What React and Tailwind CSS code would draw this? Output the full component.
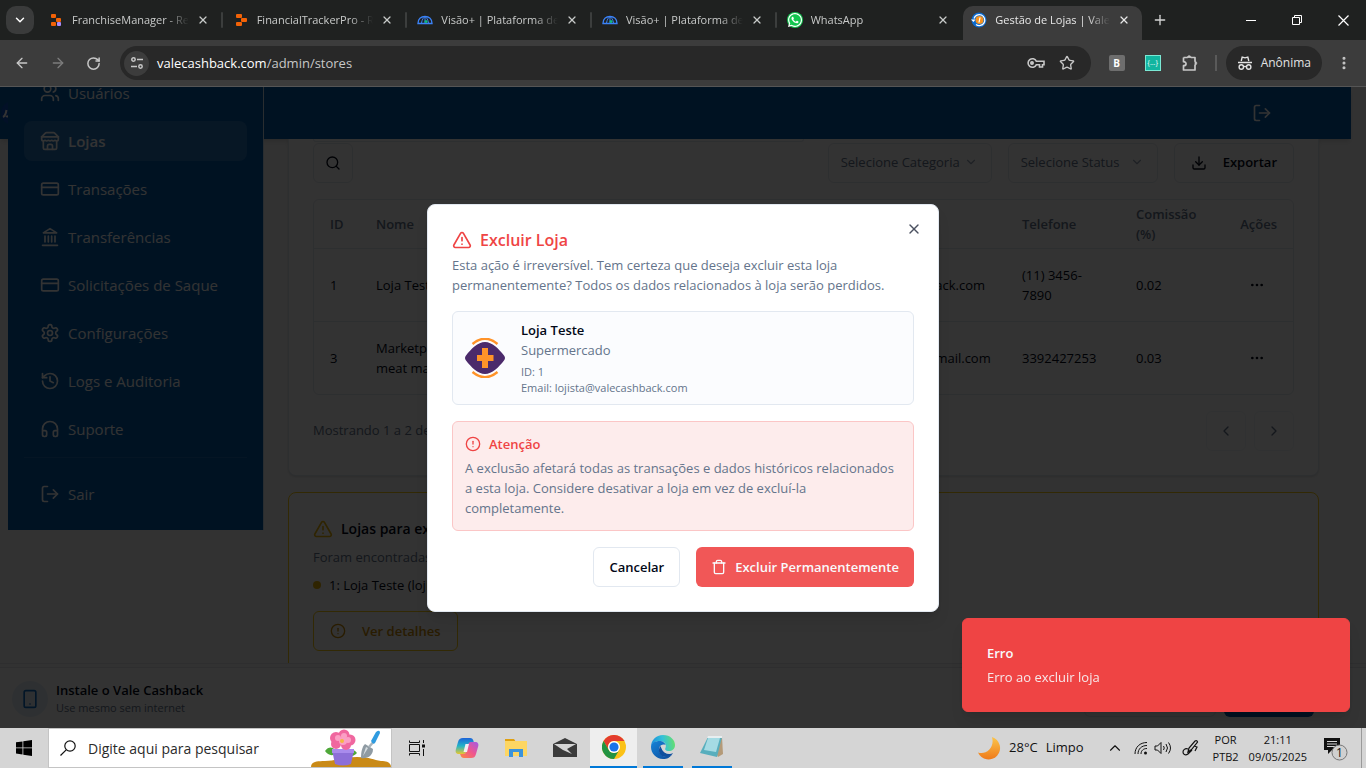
import React from 'react';
import {
  Users, CreditCard, History, Headphones, LogOut, Search, ChevronDown, ChevronLeft, ChevronRight, ChevronUp,
  Download, Ellipsis, TriangleAlert, CircleAlert, Trash, X, Smartphone, ArrowLeft, ArrowRight, RotateCw,
  Star, EllipsisVertical, Plus,
} from 'lucide-react';
import { FaWhatsapp } from 'react-icons/fa';

/* ---------- line icons ---------- */

const Line = ({ size = 20, children }) => (
  <svg width={size} height={size} viewBox="0 0 24 24" fill="none" stroke="currentColor" strokeWidth="2" strokeLinecap="round" strokeLinejoin="round" aria-hidden="true" className="shrink-0">
    {children}
  </svg>
);

const StoreIcon = () => (
  <Line>
    <path d="m2 7 4.41-4.41A2 2 0 0 1 7.83 2h8.34a2 2 0 0 1 1.42.59L22 7" />
    <path d="M4 12v8a2 2 0 0 0 2 2h12a2 2 0 0 0 2-2v-8" />
    <path d="M15 22v-4a2 2 0 0 0-2-2h-2a2 2 0 0 0-2 2v4" />
    <path d="M2 7h20" />
    <path d="M22 7v3a2 2 0 0 1-2 2a2.7 2.7 0 0 1-1.59-.63.7.7 0 0 0-.82 0A2.7 2.7 0 0 1 16 12a2.7 2.7 0 0 1-1.59-.63.7.7 0 0 0-.82 0A2.7 2.7 0 0 1 12 12a2.7 2.7 0 0 1-1.59-.63.7.7 0 0 0-.82 0A2.7 2.7 0 0 1 8 12a2.7 2.7 0 0 1-1.59-.63.7.7 0 0 0-.82 0A2.7 2.7 0 0 1 4 12a2 2 0 0 1-2-2V7" />
  </Line>
);

const BankIcon = () => (
  <Line>
    <path d="M3 22h18M6 18v-7M10 18v-7M14 18v-7M18 18v-7" />
    <path d="M12 2l8 5H4z" />
  </Line>
);

const GearIcon = () => (
  <Line>
    <path d="M12.22 2h-.44a2 2 0 0 0-2 2v.18a2 2 0 0 1-1 1.73l-.43.25a2 2 0 0 1-2 0l-.15-.08a2 2 0 0 0-2.73.73l-.22.38a2 2 0 0 0 .73 2.73l.15.1a2 2 0 0 1 1 1.72v.51a2 2 0 0 1-1 1.74l-.15.09a2 2 0 0 0-.73 2.73l.22.38a2 2 0 0 0 2.73.73l.15-.08a2 2 0 0 1 2 0l.43.25a2 2 0 0 1 1 1.73V20a2 2 0 0 0 2 2h.44a2 2 0 0 0 2-2v-.18a2 2 0 0 1 1-1.73l.43-.25a2 2 0 0 1 2 0l.15.08a2 2 0 0 0 2.73-.73l.22-.39a2 2 0 0 0-.73-2.73l-.15-.08a2 2 0 0 1-1-1.74v-.5a2 2 0 0 1 1-1.74l.15-.09a2 2 0 0 0 .73-2.73l-.22-.38a2 2 0 0 0-2.73-.73l-.15.08a2 2 0 0 1-2 0l-.43-.25a2 2 0 0 1-1-1.73V4a2 2 0 0 0-2-2z" />
    <circle cx="12" cy="12" r="3" />
  </Line>
);

/* ---------- browser ---------- */

const FranchiseFavicon = () => (
  <svg width="16" height="16" viewBox="0 0 16 16">
    <rect x="3" y="2" width="5" height="4" rx="1" fill="#f26207" />
    <rect x="8" y="6" width="5" height="4" rx="1" fill="#f26207" />
    <rect x="3" y="10" width="5" height="4" rx="1" fill="#f26207" />
    <rect x="9" y="10" width="4" height="4" rx="1" fill="#a78bfa" />
  </svg>
);

const TrackerFavicon = () => (
  <svg width="16" height="16" viewBox="0 0 16 16">
    <rect x="3" y="2" width="6" height="4" rx="1" fill="#f26207" />
    <rect x="8" y="6" width="6" height="4" rx="1" fill="#f26207" />
    <rect x="3" y="10" width="6" height="4" rx="1" fill="#f26207" />
  </svg>
);

const VisaoFavicon = () => (
  <svg width="16" height="16" viewBox="0 0 16 16" fill="none" stroke="#3b82f6" strokeWidth="1.4">
    <path d="M1 11.5C1 7 4 4.500 8 4.500S15 7 15 11.500z" />
    <path d="M4.500 11C5 7.500 6.500 5.500 8 4.500M11.500 11C11 7.500 9.500 5.500 8 4.500M8 5v6" strokeWidth="1" />
    <circle cx="9" cy="9.500" r="1.500" fill="#10b981" stroke="none" />
  </svg>
);

const WhatsFavicon = () => (
  <span className="flex size-4 items-center justify-center rounded-full bg-[#12c64f] text-white">
    <FaWhatsapp size={16} />
  </span>
);

const ValeFavicon = () => (
  <svg width="16" height="16" viewBox="0 0 16 16">
    <circle cx="8" cy="8" r="7.500" fill="#0b6bd0" />
    <path d="M3 6.500a5.500 5.500 0 1 1 2 6" fill="none" stroke="#fff" strokeWidth="1.300" />
    <path d="M0 7.500h4.500L2.500 10z" fill="#fff" />
    <circle cx="8.500" cy="8" r="4" fill="#f7931e" />
    <path d="M9 5.500l-1 5" stroke="#fff" strokeWidth="1.200" />
  </svg>
);

const tabs = [
  { title: 'FranchiseManager - Replit', icon: <FranchiseFavicon /> },
  { title: 'FinancialTrackerPro - Replit', icon: <TrackerFavicon /> },
  { title: 'Visão+ | Plataforma de saúde', icon: <VisaoFavicon /> },
  { title: 'Visão+ | Plataforma de saúde', icon: <VisaoFavicon /> },
  { title: 'WhatsApp', icon: <WhatsFavicon /> },
  { title: 'Gestão de Lojas | Vale Cashback', icon: <ValeFavicon />, active: true },
];

function Tab({ title, icon, active, divider }) {
  return (
    <div className="flex min-w-0 flex-1 items-center justify-between pr-0.5">
      <div className={'flex h-[34px] min-w-0 flex-1 items-center rounded-t-[10px] pb-1.5 pl-2 ' + (active ? 'mr-1 bg-[#3c3c3c] text-[#e8e8e8]' : 'text-[#c8cac9]')}>
        <span className="shrink-0">{icon}</span>
        <span className="ml-2 min-w-0 flex-1 overflow-hidden text-[11px] leading-4 whitespace-nowrap [mask-image:linear-gradient(to_right,black_80%,transparent)]">{title}</span>
        <button aria-label="Fechar guia" className="mr-2.5 ml-1.5 flex size-4 shrink-0 items-center justify-center">
          <X size={12} strokeWidth={2.500} />
        </button>
      </div>
      {divider && <span className="mb-1.5 h-4 w-0.5 shrink-0 rounded bg-[#3c3e3d]" />}
    </div>
  );
}

function TabBar() {
  return (
    <div className="flex h-10 items-end bg-[#1f2120]">
      <button aria-label="Pesquisar guias" className="mr-1.5 mb-1.5 ml-1.5 flex size-7 items-center justify-center rounded-[10px] bg-[#3a3b3b] text-white">
        <ChevronDown size={14} strokeWidth={2.500} />
      </button>
      <div className="flex max-w-[1108px] min-w-0 flex-1">
        {tabs.map((t, i) => <Tab key={i} {...t} divider={i < 4} />)}
      </div>
      <button aria-label="Nova guia" className="mb-3 ml-1 text-[#d5d5d5]"><Plus size={16} /></button>
      <div className="ml-auto flex h-10 text-white">
        <button aria-label="Minimizar" className="flex w-[46px] items-center justify-center">
          <svg width="10" height="10" stroke="currentColor"><path d="M0 5.500h10" /></svg>
        </button>
        <button aria-label="Restaurar" className="flex w-[46px] items-center justify-center">
          <svg width="10" height="10" fill="none" stroke="currentColor"><path d="M.5 2.500h7v7h-7zM2.500 2.500v-2h7v7h-2" /></svg>
        </button>
        <button aria-label="Fechar" className="flex w-[46px] items-center justify-center">
          <svg width="11" height="11" stroke="currentColor" strokeWidth="1.200"><path d="M.5.5l10 10M10.500.5l-10 10" /></svg>
        </button>
      </div>
    </div>
  );
}

function Toolbar() {
  return (
    <div className="flex h-[47px] items-center border-b border-[#555] bg-[#3c3c3c] text-[#c7c7c7]">
      <div className="flex w-[120px] items-center gap-5 pl-3.5">
        <button aria-label="Voltar"><ArrowLeft size={16} /></button>
        <button aria-label="Avançar" className="text-[#7c7c7c]"><ArrowRight size={16} /></button>
        <button aria-label="Recarregar"><RotateCw size={15} strokeWidth={2.400} /></button>
      </div>
      <div className="flex h-[34px] flex-1 items-center rounded-full bg-[#282828] pr-4 pl-1">
        <button aria-label="Informações do site" className="flex size-[25px] items-center justify-center rounded-full bg-[#3c3c3c]">
          <svg width="14" height="14" viewBox="0 0 14 14" fill="none" stroke="currentColor" strokeWidth="1.500">
            <circle cx="3.500" cy="3.500" r="1.700" /><path d="M7 3.500h6M1 10.500h6" /><circle cx="10.500" cy="10.500" r="1.700" />
          </svg>
        </button>
        <div className="ml-2 flex-1 text-[13px] leading-5 text-[#c7c7c7]">
          <span className="text-white">valecashback.com</span>/admin/stores
        </div>
        <button aria-label="Gerenciar senhas" className="mr-3.5">
          <svg width="18" height="12" viewBox="0 0 18 12" fill="none" stroke="currentColor" strokeWidth="1.600">
            <path d="M9.300 4.200H17v3.600h-1.500V10h-3V7.800H9.300A4.300 4.300 0 1 1 9.300 4.200z" /><circle cx="5" cy="6" r="1.200" fill="currentColor" />
          </svg>
        </button>
        <button aria-label="Adicionar aos favoritos"><Star size={16} /></button>
      </div>
      <div className="flex items-center pr-3.5 pl-[18px]">
        <span className="flex size-4 items-center justify-center rounded-[2px] bg-[#6e6e6e] text-[10px] font-bold text-white">B</span>
        <span className="ml-5 flex size-4 items-center justify-center border border-[#7be8d4] bg-[#12b5a0] text-[7px] text-white">{'{...}'}</span>
        <button aria-label="Extensões" className="ml-5">
          <svg width="18" height="18" viewBox="0 0 18 18" fill="none" stroke="currentColor" strokeWidth="1.700" strokeLinejoin="round">
            <path d="M2.500 3.500h4.300M9.700 3.500h4.300v4.300M14 10.700V16H2.500v-4.300c3.400 0 3.400-4 0-4V3.500" />
            <path d="M6.300 3.500c0-2.300 3.800-2.300 3.800 0zM14 7.300c2.300 0 2.300 3.800 0 3.800z" fill="currentColor" strokeWidth=".8" />
          </svg>
        </button>
        <span className="mr-[9px] ml-4 h-4 w-0.5 bg-[#5a5a5a]" />
        <div className="flex h-[34px] items-center gap-2 rounded-full bg-[#282828] px-[11px] text-[12px] text-[#e3e3e3]">
          <svg width="16" height="16" viewBox="0 0 16 16" fill="none" stroke="currentColor" strokeWidth="1.400">
            <path d="M4.200 6l1-4 2.800.8 2.800-.8 1 4M1 7.500h14" /><circle cx="4.300" cy="12" r="2.200" /><circle cx="11.700" cy="12" r="2.200" /><path d="M6.500 11.500h3" />
          </svg>
          Anônima
        </div>
        <button aria-label="Menu" className="ml-3.5"><EllipsisVertical size={16} strokeWidth={2.600} /></button>
      </div>
    </div>
  );
}

/* ---------- admin page ---------- */

const menu = [
  { label: 'Usuários', icon: <Users size={20} /> },
  { label: 'Lojas', icon: <StoreIcon />, active: true },
  { label: 'Transações', icon: <CreditCard size={20} /> },
  { label: 'Transferências', icon: <BankIcon /> },
  { label: 'Solicitações de Saque', icon: <CreditCard size={20} /> },
  { label: 'Configurações', icon: <GearIcon /> },
  { label: 'Logs e Auditoria', icon: <History size={20} /> },
  { label: 'Suporte', icon: <Headphones size={20} /> },
];

function Sidebar() {
  return (
    <aside className="col-start-2 row-span-2 row-start-1 flex h-[443px] flex-col justify-end overflow-hidden border-r border-white/80 bg-[#005bac] px-4 pb-4 text-[15px] leading-6 text-white">
      <nav className="flex flex-col gap-2">
        {menu.map((m) => (
          <a key={m.label} href="#" className={'flex h-10 shrink-0 items-center gap-2 rounded-lg px-4 ' + (m.active ? 'bg-white/15 font-semibold' : '')}>
            {m.icon}{m.label}
          </a>
        ))}
      </nav>
      <div className="mt-2 border-t border-white/10 pt-4">
        <a href="#" className="flex h-10 items-center gap-2 px-4"><LogOut size={20} />Sair</a>
      </div>
    </aside>
  );
}

const stores = [
  { id: '1', name: 'Loja Teste', cat: 'Mercado', mail: 'lojista@valecashback.com', phone: '(11) 3456-7890', fee: '0.02' },
  { id: '3', name: 'Marketplace meat market', cat: 'Mercado', mail: 'marketplace@hotmail.com', phone: '3392427253', fee: '0.03' },
];

const FilterSelect = ({ label, className }) => (
  <div className={'relative ' + className}>
    <select aria-label={label} defaultValue="" className="h-10 w-full appearance-none rounded-md border border-[#e2e8f0] bg-white pl-3 text-[13px] text-[#64748b]">
      <option value="">{label}</option>
    </select>
    <ChevronDown size={14} className="pointer-events-none absolute top-3 right-3.5 text-[#94a3b8]" />
  </div>
);

function StoresCard() {
  return (
    <section className="rounded-b-lg border-x border-b border-[#e2e8f0] bg-white px-6 pb-6 shadow-sm">
      <div className="mb-px h-[3px] w-1/2 rounded-b-md border-x border-b border-[#e2e8f0]" />
      <div className="flex gap-4">
        <button aria-label="Buscar" className="mr-auto flex size-10 items-center justify-center rounded-md border border-[#e2e8f0] text-[#020817]"><Search size={16} /></button>
        <FilterSelect label="Selecione Categoria" className="w-[164px]" />
        <FilterSelect label="Selecione Status" className="w-[150px]" />
        <button className="flex h-10 items-center gap-4 rounded-md border border-[#e2e8f0] px-4 text-[13px] font-semibold text-[#020817]"><Download size={16} />Exportar</button>
      </div>
      <div className="mt-4 overflow-hidden rounded-md border border-[#e2e8f0]">
        <table className="w-full table-fixed text-left text-[13px] leading-5 text-[#020817]">
          <colgroup>
            <col className="w-[46px]" /><col className="w-[124px]" /><col /><col className="w-[194px]" /><col className="w-[114px]" /><col className="w-[86px]" /><col className="w-[87px]" />
          </colgroup>
          <thead className="text-[#64748b]">
            <tr className="h-12">
              <th className="px-4 font-semibold">ID</th>
              <th className="px-4 font-semibold">Nome</th>
              <th className="px-4 font-semibold">Categoria</th>
              <th className="px-4 font-semibold">Email</th>
              <th className="px-4 font-semibold">Telefone</th>
              <th className="px-4 font-semibold">Comissão (%)</th>
              <th className="px-4 text-right font-semibold">Ações</th>
            </tr>
          </thead>
          <tbody>
            {stores.map((s) => (
              <tr key={s.id} className="h-[73px] border-t border-[#e2e8f0]">
                <td className="px-4">{s.id}</td>
                <td className="px-4">{s.name}</td>
                <td className="px-4">{s.cat}</td>
                <td className="px-4 whitespace-nowrap">{s.mail}</td>
                <td className="px-4">{s.phone}</td>
                <td className="px-4">{s.fee}</td>
                <td className="px-4">
                  <button aria-label="Ações da loja" className="ml-auto flex size-10 items-center justify-center"><Ellipsis size={16} /></button>
                </td>
              </tr>
            ))}
          </tbody>
        </table>
      </div>
      <div className="mt-4 flex items-center gap-2 text-[13px] text-[#64748b]">
        <span className="mr-auto">Mostrando 1 a 2 de 2 resultados</span>
        <button aria-label="Página anterior" className="flex size-10 items-center justify-center rounded-md border border-[#f1f5f9]"><ChevronLeft size={16} /></button>
        <button aria-label="Próxima página" className="flex size-10 items-center justify-center rounded-md border border-[#f1f5f9]"><ChevronRight size={16} /></button>
      </div>
    </section>
  );
}

function PendingCard() {
  return (
    <section className="mt-4 rounded-lg border border-[#facc15] bg-white px-6 pt-6 pb-6 text-[13px] leading-5">
      <h2 className="flex h-6 items-center gap-2 text-[14px] font-semibold text-[#020817]"><TriangleAlert size={20} className="text-[#eab308]" />Lojas para exclusão</h2>
      <p className="mt-1.5 text-[#64748b]">Foram encontradas lojas para excluir</p>
      <p className="mt-2 flex items-center gap-2 text-[#020817]"><span className="size-2 rounded-full bg-[#eab308]" />1: Loja Teste (lojista@valecashback.com)</p>
      <button className="mt-4 flex h-10 items-center gap-4 rounded-md border border-[#facc15] px-4 font-semibold text-[#ca8a04]"><CircleAlert size={16} />Ver detalhes</button>
    </section>
  );
}

function InstallBar() {
  return (
    <div className="absolute inset-x-0 bottom-0 border-t border-[#e5e7eb] bg-[#fafafa] pt-[3px]">
      <div className="flex h-[61px] items-center gap-2 border-t border-[#e5e7eb] bg-white px-3 pt-0.5">
        <span className="flex size-9 items-center justify-center rounded-full bg-[#e6f0fa] text-[#0a6cc2]"><Smartphone size={20} /></span>
        <div>
          <p className="text-[13px] leading-[18px] font-semibold text-[#020817]">Instale o Vale Cashback</p>
          <p className="text-[11px] leading-[18px] text-[#64748b]">Use mesmo sem internet</p>
        </div>
        <div className="mr-10 ml-auto flex gap-2">
          <button className="h-9 w-[132px] rounded-md border border-[#e2e8f0] text-[13px]">Agora não</button>
          <button className="h-9 w-[90px] rounded-md bg-[#005bac] text-[13px] text-white">Instalar</button>
        </div>
      </div>
    </div>
  );
}

const StoreLogo = () => (
  <svg width="40" height="40" viewBox="0 0 40 40" className="shrink-0" aria-hidden="true">
    <path d="M7.500 6Q20-4.500 32.500 6M7.500 34Q20 44.500 32.500 34" fill="none" stroke="#ff9329" strokeWidth="2.400" />
    <path d="M1 22.500Q-1 20 1 17.500C6 11 13 4 20 4s14 7 19 13.500q2 2.500 0 5C34 29 27 36 20 36S6 29 1 22.500z" fill="#4b2a6b" />
    <path d="M17 10h6v7h5.500v6H23v7h-6v-7h-5v-6h5z" fill="#ff9329" />
  </svg>
);

function DeleteDialog() {
  return (
    <div className="absolute inset-0 flex items-center justify-center bg-black/80">
      <div role="dialog" aria-modal="true" aria-labelledby="dlg-title" className="relative w-full max-w-lg rounded-lg border border-[#e2e8f0] bg-white p-6 text-[13px] leading-5 text-[#64748b] shadow-lg">
        <button aria-label="Fechar" className="absolute top-4 right-4 text-[#4b5160]"><X size={16} /></button>
        <h1 id="dlg-title" className="mb-1 flex h-[22px] items-center gap-2 text-[16px] font-semibold text-[#ef4444]"><TriangleAlert size={20} />Excluir Loja</h1>
        <p>Esta ação é irreversível. Tem certeza que deseja excluir esta loja permanentemente? Todos os dados relacionados à loja serão perdidos.</p>
        <div className="mt-4 flex h-[94px] items-center gap-4 rounded-md border border-[#e2e8f0] bg-[#fbfcfe] px-3">
          <StoreLogo />
          <div>
            <p className="font-semibold text-[#020817]">Loja Teste</p>
            <p>Supermercado</p>
            <p className="mt-1 text-[11px] leading-4">ID: 1<br />Email: lojista@valecashback.com</p>
          </div>
        </div>
        <div className="mt-4 rounded-md border border-[#fbc6c6] bg-[#fdecec] p-3">
          <p className="mb-1 flex items-center gap-2 font-semibold text-[#ef4444]"><CircleAlert size={16} />Atenção</p>
          <p>A exclusão afetará todas as transações e dados históricos relacionados a esta loja. Considere desativar a loja em vez de excluí-la completamente.</p>
        </div>
        <div className="mt-4 flex justify-end gap-4 font-semibold">
          <button className="h-10 rounded-md border border-[#e2e8f0] px-[15px] text-[#020817]">Cancelar</button>
          <button className="flex h-10 items-center gap-2 rounded-md bg-[#f15757] px-[15px] text-[#f8fafc]"><Trash size={16} />Excluir Permanentemente</button>
        </div>
      </div>
    </div>
  );
}

function AdminPage() {
  return (
    <div className="relative min-h-0 flex-1 overflow-hidden bg-[#fafafa]">
      <div className="grid grid-cols-[8px_256px_minmax(0,1fr)] grid-rows-[52px_auto] pr-[15px]">
        <header className="col-span-3 col-start-1 row-start-1 flex items-center justify-between bg-[#005bac] text-white shadow-md">
          <svg width="24" height="24" viewBox="0 0 24 24" aria-hidden="true">
            <circle cx="13" cy="12" r="12" fill="#0a4fc0" /><path d="M3 16c2-1 3-4 3.500-7M6 15q1 1 3 0" fill="none" stroke="#fff" strokeWidth="2" />
          </svg>
          <button aria-label="Sair" className="mr-[79px]"><LogOut size={20} /></button>
        </header>
        <Sidebar />
        <main className="col-start-3 row-start-2 pr-8 pl-6">
          <StoresCard />
          <PendingCard />
        </main>
      </div>
      <InstallBar />
      <DeleteDialog />
      <div role="alert" className="absolute right-4 bottom-4 w-[388px] rounded-md border border-[#ef4444] bg-[#ef4444] p-6 text-[13px] leading-5 text-[#f8fafc] shadow-lg">
        <p className="font-semibold">Erro</p>
        <p className="mt-1 opacity-90">Erro ao excluir loja</p>
      </div>
    </div>
  );
}

/* ---------- taskbar ---------- */

const Garden = () => (
  <svg width="80" height="38" viewBox="0 0 80 38" className="shrink-0" aria-hidden="true">
    <path d="M0 38c0-5 5-6 14-6 10 0 16-4 32-4 14 0 16 3 24 4 8 0 10 3 10 6z" fill="#c98a17" />
    <path d="M14 22c4-6 10-4 12 2-5 4-9 2-12-2zM46 24c-5-6-11-3-12 1 4 4 8 3 12-1z" fill="#4fa83a" />
    <path d="M21 21h22l-3 14q-8 3-16 0z" fill="#8d6fd8" /><path d="M21 20h22v4H21z" fill="#a98bec" />
    <g fill="#f0679f"><circle cx="25" cy="9" r="6" /><circle cx="33" cy="6" r="5.500" /><circle cx="39" cy="11" r="5.500" /><circle cx="35" cy="16" r="5" /><circle cx="25" cy="15" r="5" /></g>
    <g fill="#fb9fc4"><circle cx="27" cy="9" r="3" /><circle cx="33" cy="7" r="3" /><circle cx="37" cy="11" r="3" /><circle cx="32" cy="12" r="4" /></g>
    <circle cx="31" cy="12" r="2" fill="#f5b83d" />
    <path d="M54 15l8 5c0 7-6 10-12 9 0-6 1-11 4-14z" fill="#8f9ba3" /><path d="M55 18l2 1-5 8z" fill="#d6dde1" /><path d="M58 18l6-7" stroke="#a9b4bb" strokeWidth="2.500" />
    <path d="M60 12l5-9q4-3 4 1l-5 10q-2 2-4-2z" fill="#2f9be0" />
  </svg>
);

const TaskView = () => (
  <svg width="18" height="16" viewBox="0 0 18 16" fill="none" stroke="#111" aria-hidden="true">
    <path d="M1.500.5v2h10v-2M1.500 15.500v-2h10v2M1.500 4.500h10v7h-10zM15.500 0v3M15.500 9v7" /><rect x="14" y="4.500" width="3" height="3" fill="#111" stroke="none" />
  </svg>
);

const Copilot = () => (
  <svg width="24" height="24" viewBox="0 0 24 24" aria-hidden="true">
    <defs>
      <linearGradient id="cpa" x1="0" y1="0" x2="0" y2="1"><stop offset="0" stopColor="#1d63d8" /><stop offset=".5" stopColor="#22b4c8" /><stop offset="1" stopColor="#e9c72e" /></linearGradient>
      <linearGradient id="cpb" x1="1" y1="0" x2="0" y2="1"><stop offset="0" stopColor="#a25ae6" /><stop offset=".5" stopColor="#f0568d" /><stop offset="1" stopColor="#fb8b3c" /></linearGradient>
    </defs>
    <path d="M8 2h7c2 0 3 1 3.500 3l.5 2h-3c-2 0-3 1-3.500 3l-1.500 6c-.5 1.500-1 2-3 2H4c-3 0-4-2-3-5l2-7c1-3 2-4 5-4z" fill="url(#cpa)" />
    <path d="M16 22H9c-2 0-3-1-3.500-3L5 18h3c2 0 3-1 3.500-3L13 9c.5-1.500 1-3 3-3h4c3 0 4 2 3 5l-2 7c-1 3-2 4-5 4z" fill="url(#cpb)" />
    <path d="M10.500 8h3.500l-2 8H8.500z" fill="#f2eef2" />
  </svg>
);

const Explorer = () => (
  <svg width="22" height="20" viewBox="0 0 22 20" aria-hidden="true">
    <path d="M0 1h9l2 3H0z" fill="#e0a010" /><path d="M0 3h22v15H0z" fill="#fdd663" />
    <path d="M4 11h14v8h-4v-5H8v5H4z" fill="#3b93dc" />
  </svg>
);

const Mail = () => (
  <svg width="24" height="20" viewBox="0 0 24 20" aria-hidden="true">
    <path d="M0 6l12-6 12 6v13H0z" fill="#3b3b3b" /><path d="M1 6h22l-9 5 5 5-9-4z" fill="#d5d5d5" />
  </svg>
);

const Chrome = () => (
  <svg width="24" height="24" viewBox="0 0 24 24" aria-hidden="true">
    <circle cx="12" cy="12" r="12" fill="#fbc116" />
    <path d="M1.600 6A12 12 0 0 1 22.400 6H12a6 6 0 0 0-5.200 9z" fill="#e33b2e" />
    <path d="M1.600 6a12 12 0 0 0 10.400 18l5.200-9A6 6 0 0 1 6.800 15z" fill="#229342" />
    <circle cx="12" cy="12" r="6" fill="#fff" /><circle cx="12" cy="12" r="4.600" fill="#1a73e8" />
  </svg>
);

const Edge = () => (
  <svg width="24" height="24" viewBox="0 0 24 24" aria-hidden="true">
    <defs>
      <linearGradient id="ega" x1="0" y1=".4" x2="1" y2=".3"><stop offset="0" stopColor="#1b8fdc" /><stop offset=".5" stopColor="#35c1d8" /><stop offset="1" stopColor="#66e06a" /></linearGradient>
      <linearGradient id="egb" x1="0" y1="0" x2="1" y2="1"><stop offset="0" stopColor="#1784d8" /><stop offset="1" stopColor="#0c4a9a" /></linearGradient>
    </defs>
    <path d="M0 12C0 5 5 0 12 0c7.500 0 12 5 12 10 0 4-3 6-6 6-3.500 0-4.500-1.500-3.500-3C16 9 13 6 9 6 4 6 0 9 0 12z" fill="url(#ega)" />
    <path d="M0 12c0-4 4-6 9-6 2 0 5 1.500 5.500 4C10 8 6 13 9 18c2 4 7 5 12 1.500C18 24 14 24 12 24 5 24 0 18 0 12z" fill="url(#egb)" />
    <path d="M9.500 11c-4 5 0 12 7 11 3-.5 5-3 5.500-4-4 2-10 1-12.500-7z" fill="#0f4f9e" />
    <path d="M11 13c.5 4 4 6 8 5.500l2.500-.8c-2 .7-6 .2-7.500-3z" fill="#d5d5d5" />
  </svg>
);

const Notepad = () => (
  <svg width="24" height="22" viewBox="0 0 24 22" aria-hidden="true">
    <path d="M8 1h14l1 17-5 3z" fill="#b49a78" /><path d="M8 1h14l-5 20-17-4z" fill="#58aebd" /><path d="M8 2h12l-4 14-12-2z" fill="#a5dbe4" /><path d="M8 0h14v2H7z" fill="#e8eef0" />
  </svg>
);

const apps = [
  { name: 'Copilot', icon: <Copilot /> },
  { name: 'Explorador de Arquivos', icon: <Explorer /> },
  { name: 'Email', icon: <Mail /> },
  { name: 'Google Chrome', icon: <Chrome />, open: true, active: true },
  { name: 'Microsoft Edge', icon: <Edge />, open: true },
  { name: 'Bloco de Notas', icon: <Notepad />, open: true },
];

function Taskbar() {
  return (
    <div className="flex h-10 items-stretch bg-[#d5d5d5] text-[13px] text-[#111]">
      <button aria-label="Iniciar" className="flex w-12 items-center justify-center">
        <svg width="16" height="16" viewBox="0 0 16 16"><path d="M0 2.300l6.500-.9v6.100H0zM7.300 1.300L16 0v7.500H7.300zM0 8.300h6.500v6.200L0 13.600zM7.300 8.300H16V16l-8.700-1.300z" /></svg>
      </button>
      <label className="flex w-[344px] items-center border border-[#c4c4c4] bg-white pl-[11px]">
        <svg width="16" height="16" viewBox="0 0 16 16" fill="none" stroke="#111" strokeWidth="1.200"><circle cx="10" cy="6" r="5.200" /><path d="M6.200 9.800L.5 15.500" /></svg>
        <input aria-label="Pesquisar" placeholder="Digite aqui para pesquisar" className="ml-3 min-w-0 flex-1 text-[14px] placeholder:text-[#2b2b2b]" />
        <Garden />
      </label>
      <button aria-label="Visão de tarefas" className="flex w-[50px] items-center justify-center"><TaskView /></button>
      {apps.map((a) => (
        <button key={a.name} aria-label={a.name} className="flex w-[49px] flex-col items-center">
          <span className={'flex w-[47px] flex-1 items-center justify-center ' + (a.active ? 'bg-[#eeeeee]' : '')}>{a.icon}</span>
          {a.open && <span className={'h-0.5 bg-[#0078d7] ' + (a.active ? 'w-[47px]' : 'w-10')} />}
        </button>
      ))}
      <div className="ml-auto flex items-center">
        <svg width="24" height="24" viewBox="0 0 24 24" aria-hidden="true">
          <defs><linearGradient id="mn" x1="0" y1="0" x2="0" y2="1"><stop offset="0" stopColor="#fbc54a" /><stop offset="1" stopColor="#ef7a1a" /></linearGradient></defs>
          <path d="M15 1a11.500 11.500 0 1 1-14 15.500C9 19 18 12 15 1z" fill="url(#mn)" />
        </svg>
        <span className="ml-2">28°C</span>
        <span className="mr-[22px] ml-2">Limpo</span>
        <ChevronUp size={18} strokeWidth={1.500} />
        <svg width="14" height="14" viewBox="0 0 14 14" fill="none" stroke="#111" className="ml-2.5 shrink-0" aria-hidden="true">
          <path d="M1 13C1 6 6 1.500 13 1.500M4 13c0-5 3.500-8.500 9-8.500M7 13c0-3.500 2.500-5.500 6-5.500" /><circle cx="11.500" cy="12" r="1.500" fill="#111" stroke="none" />
        </svg>
        <svg width="18" height="14" viewBox="0 0 18 14" fill="none" stroke="#111" className="ml-1.5 shrink-0" aria-hidden="true">
          <path d="M1 5h2.500L7 1.500v11L3.500 9H1zM9.500 5q1.500 2 0 4M12 3q3 4 0 8M14.500 1.500q4 5.500 0 11" />
        </svg>
        <svg width="17" height="17" viewBox="0 0 17 17" fill="none" stroke="#111" strokeWidth="1.200" className="ml-2.5 shrink-0" aria-hidden="true">
          <path d="M6 12l1-4 6-7q2-1 2.500 1L9.500 9.500zM6 9c-3-1-5 1-5 3s2 4 5 2l4-4M12 6l3 1-2 4" />
        </svg>
        <div className="ml-3.5 text-center text-[11px] leading-[17px]">POR<br />PTB2</div>
        <div className="ml-2.5 text-center text-[11px] leading-[17px]">21:11<br />09/05/2025</div>
        <button aria-label="Notificações, 1 nova" className="mr-3 ml-4 flex">
          <svg width="26" height="26" viewBox="0 0 26 26" aria-hidden="true">
            <path d="M1 3h16v12H9l-4 4v-4H1z" fill="#111" /><path d="M4 6.500h10M4 9h10M4 11.500h10" stroke="#d5d5d5" />
            <circle cx="16.500" cy="17.500" r="7.500" fill="#d0d0d0" stroke="#777" /><text x="16.500" y="21.500" textAnchor="middle" fontSize="12" fill="#111">1</text>
          </svg>
        </button>
        <span className="mr-1 h-10 w-px bg-[#9a9a9a]" />
      </div>
    </div>
  );
}

export default function App() {
  return (
    <div className="flex h-screen flex-col overflow-hidden font-['Open_Sans','Noto_Sans',sans-serif]">
      <TabBar />
      <Toolbar />
      <AdminPage />
      <Taskbar />
    </div>
  );
}
